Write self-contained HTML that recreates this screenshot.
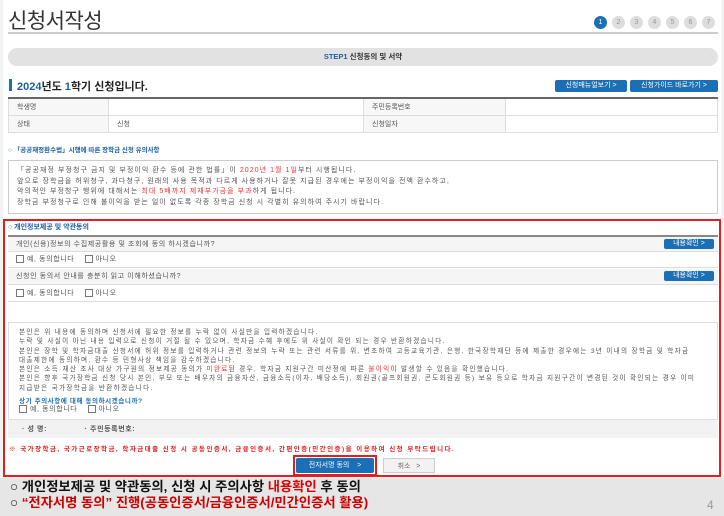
<!DOCTYPE html>
<html><head><meta charset="utf-8"><style>
*{margin:0;padding:0;box-sizing:border-box}
body{width:724px;height:516px;overflow:hidden;background:#f3f3f3;font-family:"Liberation Sans","Noto Sans CJK KR",sans-serif;color:#333;position:relative}
.a{position:absolute}
.s{font-size:7px;color:#555;white-space:nowrap;letter-spacing:0.6px}
.red{color:#e33}
.circ{position:absolute;top:16px;width:13px;height:13px;border-radius:50%;background:#ddd;color:#fff;font-size:7px;text-align:center;line-height:13px}
.btn{position:absolute;background:#1a6fb5;color:#fff;font-size:7px;text-align:center;line-height:12px;border-radius:2px}
.cb{display:inline-block;width:8px;height:8px;border:1px solid #777;vertical-align:middle;margin-right:3px;background:#fff}
td{border:1px solid #ddd;font-size:7px;color:#555;padding-left:8px;height:17px}
</style></head><body>
<div class="a" style="left:3px;top:0;width:718px;height:477px;background:#fff"></div>
<div class="a" style="left:8px;top:5px;font-size:21px;color:#333;font-weight:normal;letter-spacing:-0.5px">신청서작성</div>
<div class="circ" style="left:594px;background:#1a6fb5">1</div>
<div class="circ" style="left:612px;color:#999">2</div>
<div class="circ" style="left:630px;color:#999">3</div>
<div class="circ" style="left:648px;color:#999">4</div>
<div class="circ" style="left:666px;color:#999">5</div>
<div class="circ" style="left:684px;color:#999">6</div>
<div class="circ" style="left:702px;color:#999">7</div>
<div class="a" style="left:8px;top:32px;width:710px;height:2px;background:#ccc"></div>
<div class="a" style="left:8px;top:48px;width:710px;height:18px;background:#e2e2e2;border-radius:9px;text-align:center;font-size:7.5px;line-height:18px;font-weight:bold;color:#333"><span style="color:#1a5fa5">STEP1</span> 신청동의 및 서약</div>
<div class="a" style="left:9px;top:79px;width:3px;height:12px;background:#1a6fb5"></div>
<div class="a" style="left:17px;top:78px;font-size:11px;font-weight:bold;color:#222"><span style="color:#1a5fa5">2024</span>년도 <span style="color:#1a5fa5">1</span>학기 신청입니다.</div>
<div class="btn" style="left:555px;top:80px;width:72px">신청매뉴얼보기 &gt;</div>
<div class="btn" style="left:630px;top:80px;width:88px">신청가이드 바로가기 &gt;</div>
<table class="a" style="left:8px;top:97px;width:710px;border-collapse:collapse;border-top:2px solid #666;background:#fff">
<tr><td style="width:100px;background:#f7f7f7">학생명</td><td style="width:255px"></td><td style="width:142px;background:#f7f7f7">주민등록번호</td><td></td></tr>
<tr><td style="background:#f7f7f7">상태</td><td>신청</td><td style="background:#f7f7f7">신청일자</td><td></td></tr></table>
<div class="a" style="left:8px;top:144px;font-size:6.5px;font-weight:bold;color:#1a5fa5">○ 「공공재정환수법」시행에 따른 장학금 신청 유의사항</div>
<div class="a" style="left:8px;top:160px;width:710px;height:54px;border:1px solid #ccc;background:#fff"></div>
<div class="a s" style="left:17px;top:166px;line-height:10.5px;letter-spacing:1.05px">「공공재정 부정청구 금지 및 부정이익 환수 등에 관한 법률」이 <span class="red">2020년 1월 1일</span>부터 시행됩니다.<br>앞으로 장학금을 허위청구, 과다청구, 원래의 사용 목적과 다르게 사용하거나 잘못 지급된 경우에는 부정이익을 전액 환수하고,<br>악의적인 부정청구 행위에 대해서는 <span class="red">최대 5배까지 제재부가금을 부과</span>하게 됩니다.<br>장학금 부정청구로 인해 불이익을 받는 일이 없도록 각종 장학금 신청 시 각별히 유의하여 주시기 바랍니다.</div>
<div class="a" style="left:3px;top:219px;width:718px;height:258px;border:2px solid #e02020"></div>
<div class="a" style="left:8px;top:222px;font-size:7px;font-weight:bold;color:#1a5fa5">○ 개인정보제공 및 약관동의</div>
<div class="a" style="left:8px;top:235px;width:710px;height:2px;background:#888"></div>
<div class="a s" style="left:8px;top:237px;width:710px;height:15px;background:#f5f5f5;border-bottom:1px solid #ddd;padding-left:8px;line-height:15px">개인(신용)정보의 수집제공활용 및 조회에 동의 하시겠습니까?</div>
<div class="btn" style="left:664px;top:239px;width:50px;height:10px;line-height:10px">내용확인 &gt;</div>
<div class="a s" style="left:8px;top:252px;width:710px;height:16px;border-bottom:1px solid #ddd;padding-left:8px;line-height:16px;background:#fff"><span class="cb"></span>예, 동의합니다 &nbsp;&nbsp;&nbsp;<span class="cb"></span>아니오</div>
<div class="a s" style="left:8px;top:269px;width:710px;height:16px;background:#f5f5f5;border-bottom:1px solid #ddd;padding-left:8px;line-height:16px">신청인 동의서 안내를 충분히 읽고 이해하셨습니까?</div>
<div class="btn" style="left:664px;top:271px;width:50px;height:10px;line-height:10px">내용확인 &gt;</div>
<div class="a s" style="left:8px;top:286px;width:710px;height:16px;border-bottom:1px solid #ddd;padding-left:8px;line-height:16px;background:#fff"><span class="cb"></span>예, 동의합니다 &nbsp;&nbsp;&nbsp;<span class="cb"></span>아니오</div>
<div class="a" style="left:8px;top:322px;width:710px;height:116px;border:1px solid #ddd;background:#fff"></div>
<div class="a s" style="left:19px;top:328px;line-height:9.3px;font-size:6.6px;letter-spacing:1.3px">본인은 위 내용에 동의하며 신청서에 필요한 정보를 누락 없이 사실만을 입력하겠습니다.<br>누락 및 사실이 아닌 내용 입력으로 신청이 거절 될 수 있으며, 학자금 수혜 후에도 위 사실이 확인 되는 경우 반환하겠습니다.<br>본인은 장학 및 학자금대출 신청서에 허위 정보를 입력하거나 관련 정보의 누락 또는 관련 서류를 위, 변조하여 고등교육기관, 은행, 한국장학재단 등에 제출한 경우에는 3년 이내의 장학금 및 학자금<br>대출제한에 동의하며, 환수 등 민형사상 책임을 감수하겠습니다.<br>본인은 소득·재산 조사 대상 가구원의 정보제공 동의가 <span class="red">미완료</span>된 경우, 학자금 지원구간 미산정에 따른 <span class="red">불이익</span>이 발생할 수 있음을 확인했습니다.<br>본인은 향후 국가장학금 신청 당시 본인, 부모 또는 배우자의 금융자산, 금융소득(이자, 배당소득), 회원권(골프회원권, 콘도회원권 등) 보유 등으로 학자금 지원구간이 변경된 것이 확인되는 경우 이미<br>지급받은 국가장학금을 반환하겠습니다.</div>
<div class="a" style="left:19px;top:395px;font-size:6.5px;font-weight:bold;color:#1a6fb5;letter-spacing:0.6px">상기 주의사항에 대해 동의하시겠습니까?</div>
<div class="a s" style="left:19px;top:404px"><span class="cb"></span>예, 동의합니다 &nbsp;&nbsp;&nbsp;<span class="cb"></span>아니오</div>
<div class="a s" style="left:8px;top:419px;width:710px;height:19px;background:#f2f2f2;border-top:1px solid #ddd;padding-left:14px;line-height:19px;font-weight:bold">· 성 명: <span style="display:inline-block;width:35px"></span>· 주민등록번호:</div>
<div class="a" style="left:9px;top:443px;font-size:6.5px;color:#e02020;font-weight:bold;letter-spacing:1.45px;white-space:nowrap">※ 국가장학금, 국가근로장학금, 학자금대출 신청 시 공동인증서, 금융인증서, 간편인증(민간인증)을 이용하여 신청 부탁드립니다.</div>
<div class="a" style="left:293px;top:455px;width:84px;height:21px;border:2px solid #e02020"></div>
<div class="btn" style="left:296px;top:458px;width:78px;height:15px;line-height:15px">전자서명 동의 &nbsp;&nbsp;&nbsp;&gt;</div>
<div class="a" style="left:383px;top:458px;width:52px;height:15px;line-height:15px;border:1px solid #ccc;background:#f2f2f2;font-size:7px;color:#666;text-align:center">취소 &nbsp;&nbsp;&gt;</div>
<div class="a" style="left:0;top:478px;width:724px;height:38px;background:#e6e6e6"></div>
<div class="a" style="left:10px;top:479px;font-size:13.3px;font-weight:bold;color:#111;line-height:16px;white-space:nowrap">○ 개인정보제공 및 약관동의, 신청 시 주의사항 <span style="color:#d00">내용확인</span> 후 동의<br>○ <span style="color:#c00">“전자서명 동의” 진행(공동인증서/금융인증서/민간인증서 활용)</span></div>
<div class="a" style="left:707px;top:498px;font-size:12px;color:#999">4</div>
</body></html>
